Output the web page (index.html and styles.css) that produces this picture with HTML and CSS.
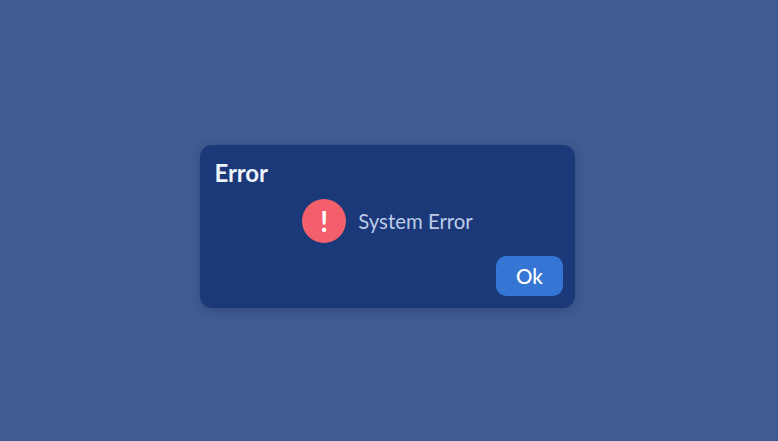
FILE: index.html
```html
<!DOCTYPE html>
<html lang="en">
<head>
  <meta charset="UTF-8">
  <meta name="viewport" content="width=device-width, initial-scale=1.0">
  <title>Error</title>
  <link rel="stylesheet" href="styles.css">
</head>
<body>
  <div class="dialog">
    <h1 class="dialog-title">Error</h1>
    <div class="dialog-body">
      <div class="error-icon">!</div>
      <div class="error-text">System Error</div>
    </div>
    <div class="dialog-actions">
      <button class="ok-btn">Ok</button>
    </div>
  </div>
</body>
</html>
```

FILE: styles.css
```css
body {
  font-family: 'Lato', sans-serif;
  display: flex;
  justify-content: center;
  align-items: center;
  height: 441px;
  box-sizing: border-box;
  margin: 0;
  padding: 12px 3px 0 0;
  background: #3e5b92;
  overflow: hidden;
}

.dialog {
  width: 375px;
  height: 163px;
  box-sizing: border-box;
  padding: 14px 12px 12px 14.5px;
  background: #1b3978;
  border-radius: 12px;
  box-shadow: 0 2px 10px rgba(0, 0, 0, 0.2);
}

.dialog-title {
  margin: 0;
  font-size: 24px;
  line-height: 28px;
  font-weight: 700;
  letter-spacing: -0.1px;
  color: #eef2fa;
}

.dialog-body {
  display: flex;
  justify-content: center;
  align-items: center;
  gap: 12px;
  margin-top: 12px;
  padding-right: 2.5px;
}

.error-icon {
  width: 44px;
  height: 44px;
  border-radius: 50%;
  background: #f35f6a;
  color: #fff;
  font-size: 28px;
  font-weight: 700;
  line-height: 44px;
  text-align: center;
}

.error-text {
  font-size: 20.4px;
  color: #bccbe8;
}

.dialog-actions {
  display: flex;
  justify-content: flex-end;
  margin-top: 13px;
}

.ok-btn {
  width: 67px;
  height: 40px;
  padding: 0;
  background: #3575d3;
  color: #fff;
  border: none;
  border-radius: 10px;
  font-family: 'Lato', sans-serif;
  font-size: 20.5px;
  font-weight: 500;
}
```
